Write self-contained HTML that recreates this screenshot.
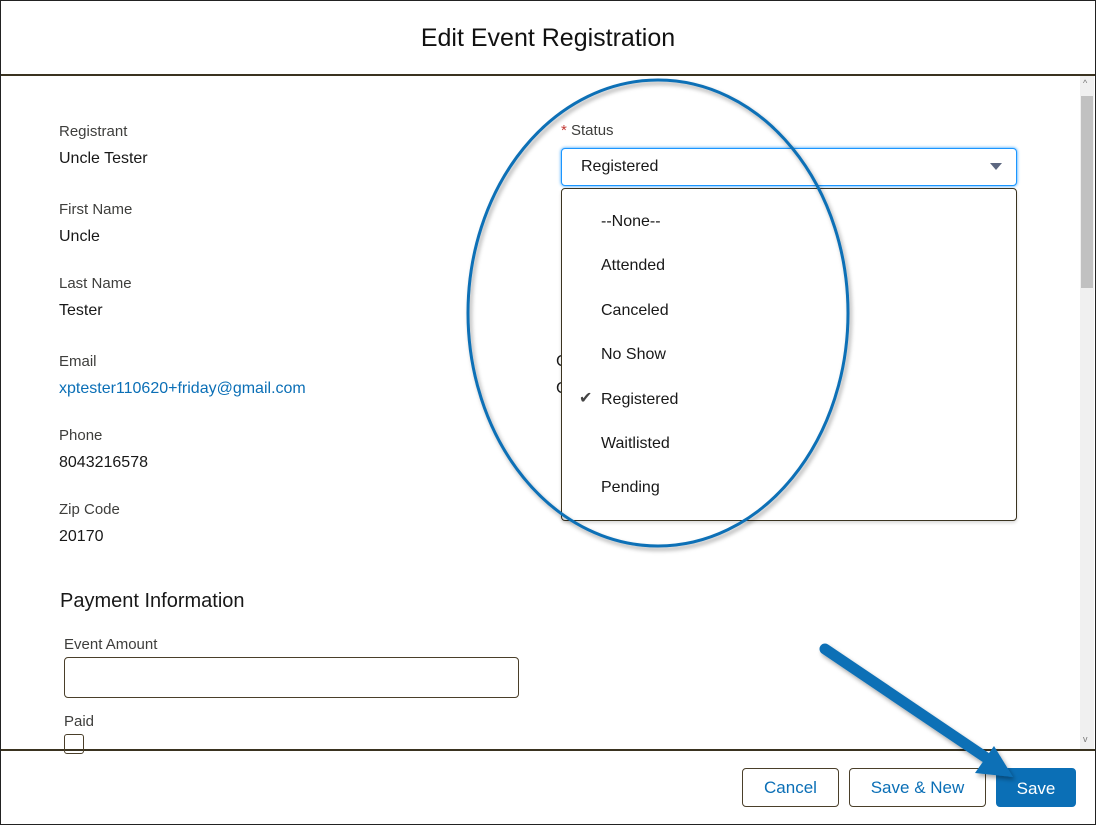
<!DOCTYPE html>
<html><head><style>
body{margin:0;width:1096px;height:825px;overflow:hidden;background:#fff;font-family:"Liberation Sans",Arial,sans-serif;position:relative}
.frame{position:absolute;left:0;top:0;width:1094px;height:823px;border:1px solid #222}
.t{position:absolute;white-space:nowrap}
.lbl{font-size:15px;color:#3e3e3c}
.val{font-size:16px;color:#181818}
.opt{position:absolute;left:601px;font-size:16px;color:#181818}
.btn{position:absolute;top:768px;height:39px;border:1px solid #4a3f2a;border-radius:4px;box-sizing:border-box;font-size:17px;color:#0b6fb6;text-align:center;line-height:37px;background:#fff}
</style></head><body>
<div class="frame"></div>
<div class="t" style="left:0;width:1096px;text-align:center;top:24px;font-size:25px;color:#111">Edit Event Registration</div>
<div style="position:absolute;left:1px;top:74px;width:1094px;height:2px;background:#3a3320"></div>
<div style="position:absolute;left:1px;top:749px;width:1094px;height:2px;background:#3a3320"></div>
<div style="position:absolute;left:1080px;top:76px;width:14px;height:673px;background:#f0f0f0"></div>
<div style="position:absolute;left:1081px;top:96px;width:12px;height:192px;background:#c1c1c1"></div>
<div class="t" style="left:1083px;top:78px;font-size:9px;color:#777">^</div>
<div class="t" style="left:1083px;top:734px;font-size:9px;color:#777">v</div>

<div class="t lbl" style="left:59px;top:123px">Registrant</div>
<div class="t val" style="left:59px;top:150px">Uncle Tester</div>
<div class="t lbl" style="left:59px;top:201px">First Name</div>
<div class="t val" style="left:59px;top:228px">Uncle</div>
<div class="t lbl" style="left:59px;top:275px">Last Name</div>
<div class="t val" style="left:59px;top:302px">Tester</div>
<div class="t lbl" style="left:59px;top:353px">Email</div>
<div class="t val" style="left:59px;top:380px;color:#0b6fb6">xptester110620+friday@gmail.com</div>
<div class="t lbl" style="left:59px;top:427px">Phone</div>
<div class="t val" style="left:59px;top:454px">8043216578</div>
<div class="t lbl" style="left:59px;top:501px">Zip Code</div>
<div class="t val" style="left:59px;top:528px">20170</div>
<div class="t" style="left:60px;top:590px;font-size:20px;color:#181818">Payment Information</div>
<div class="t lbl" style="left:64px;top:636px">Event Amount</div>
<div style="position:absolute;left:64px;top:657px;width:455px;height:41px;box-sizing:border-box;border:1px solid #4a3f2a;border-radius:4px"></div>
<div class="t lbl" style="left:64px;top:713px">Paid</div>
<div style="position:absolute;left:64px;top:734px;width:20px;height:20px;box-sizing:border-box;border:1px solid #4a3f2a;border-radius:3px"></div>
<div class="t val" style="left:556px;top:353px">C</div>
<div class="t val" style="left:556px;top:380px">C</div>

<div class="t lbl" style="left:561px;top:122px"><span style="color:#c23934">*</span> Status</div>
<div style="position:absolute;left:561px;top:148px;width:456px;height:38px;box-sizing:border-box;border:1px solid #1b96ff;border-radius:4px;box-shadow:0 0 3px #1b96ff;background:#fff"></div>
<div class="t val" style="left:581px;top:158px">Registered</div>
<div style="position:absolute;left:990px;top:163px;width:0;height:0;border-left:6px solid transparent;border-right:6px solid transparent;border-top:7px solid #5c6780"></div>
<div style="position:absolute;left:561px;top:188px;width:456px;height:333px;box-sizing:border-box;border:1px solid #3a3320;border-radius:4px;background:#fff;box-shadow:0 2px 3px rgba(0,0,0,.15)"></div>
<div class="opt" style="top:213px">--None--</div>
<div class="opt" style="top:257px">Attended</div>
<div class="opt" style="top:302px">Canceled</div>
<div class="opt" style="top:346px">No Show</div>
<div class="t" style="left:579px;top:388px;font-size:16px;color:#444">✔</div>
<div class="opt" style="top:391px">Registered</div>
<div class="opt" style="top:435px">Waitlisted</div>
<div class="opt" style="top:479px">Pending</div>

<div class="btn" style="left:742px;width:97px">Cancel</div>
<div class="btn" style="left:849px;width:137px">Save &amp; New</div>
<div class="btn" style="left:996px;width:80px;background:#0b6fb6;border-color:#0b6fb6;color:#fff;line-height:39px">Save</div>

<svg style="position:absolute;left:0;top:0" width="1096" height="825">
<defs><filter id="s"><feDropShadow dx="2" dy="3" stdDeviation="2" flood-opacity=".35"/></filter></defs>
<ellipse cx="658" cy="313" rx="190" ry="233" fill="none" stroke="#0b6fb6" stroke-width="3" filter="url(#s)"/>
<g filter="url(#s)">
<line x1="825" y1="649" x2="985" y2="757" stroke="#0b6fb6" stroke-width="11" stroke-linecap="round"/>
<polygon points="1013,777 975,773 994,746" fill="#0b6fb6"/>
</g>
</svg>
</body></html>
